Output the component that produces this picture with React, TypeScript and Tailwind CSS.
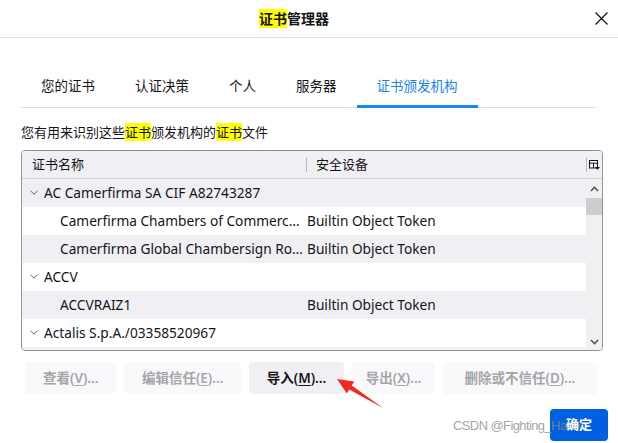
import React from "react";

const FONT = "font-['Noto_Sans','Noto_Sans_CJK_SC',sans-serif]";

type Row = { name: string; device?: string; group?: boolean };

const rows: Row[] = [
  { name: "AC Camerfirma SA CIF A82743287", group: true },
  { name: "Camerfirma Chambers of Commerc…", device: "Builtin Object Token" },
  { name: "Camerfirma Global Chambersign Ro…", device: "Builtin Object Token" },
  { name: "ACCV", group: true },
  { name: "ACCVRAIZ1", device: "Builtin Object Token" },
  { name: "Actalis S.p.A./03358520967", group: true },
];

const tabs = ["您的证书", "认证决策", "个人", "服务器", "证书颁发机构"];

function Mark({ children }: { children: React.ReactNode }) {
  return <span className="bg-[#ffff00]">{children}</span>;
}

function ChevronDown() {
  return (
    <svg width="8" height="5" viewBox="0 0 8 5" className="shrink-0">
      <path d="M0.5 0.8 L4 4.2 L7.5 0.8" fill="none" stroke="#5b5b66" strokeWidth="1" />
    </svg>
  );
}

function ScrollArrow({ up }: { up?: boolean }) {
  return (
    <svg width="9" height="6" viewBox="0 0 9 6">
      <path
        d={up ? "M1 5 L4.5 1.3 L8 5" : "M1 1 L4.5 4.7 L8 1"}
        fill="none"
        stroke="#505050"
        strokeWidth="1.6"
      />
    </svg>
  );
}

function ColumnPicker() {
  return (
    <svg width="11" height="10" viewBox="0 0 11 10">
      <rect x="0.5" y="0.5" width="8" height="7.5" fill="none" stroke="#15141a" strokeWidth="1" />
      <path d="M0.5 3.2 H8.5 M4.5 3.2 V8" stroke="#15141a" strokeWidth="1" />
      <path d="M6 7 H11 L8.5 9.8 Z" fill="#15141a" />
    </svg>
  );
}

function Btn({
  width,
  label,
  keyChar,
  disabled,
}: {
  width: string;
  label: string;
  keyChar: string;
  disabled?: boolean;
}) {
  return (
    <button
      className={`${width} h-[32px] rounded-[4px] text-[13.5px] font-semibold whitespace-nowrap flex items-center justify-center ${
        disabled ? "bg-[#f9f9fb] text-[#a5a5a8]" : "bg-[#f0f0f4] text-[#15141a]"
      }`}
    >
      <span>
        {label}(<u className="underline-offset-2">{keyChar}</u>)...
      </span>
    </button>
  );
}

export default function App() {
  return (
    <div className={`${FONT} relative w-[618px] h-[443px] overflow-hidden bg-white text-[#15141a]`}>
      <div className="flex items-center h-[38px] border-b border-[#e0e0e6]">
        <div className="flex-1 text-center text-[14px] font-bold">
          <Mark>证书</Mark>管理器
        </div>
        <button className="w-[26px] h-[26px] mr-[4px] flex items-center justify-center">
          <svg width="13" height="13" viewBox="0 0 13 13">
            <path d="M0.5 0.5 L12.5 12.5 M12.5 0.5 L0.5 12.5" stroke="#15141a" strokeWidth="1.3" />
          </svg>
        </button>
      </div>

      <div className="px-[21px]">
        <div className="mt-[30px] flex border-b border-[#e0e0e6]">
          {tabs.map((t, i) => {
            const active = i === tabs.length - 1;
            return (
              <div
                key={t}
                className={`h-[40px] px-5 flex items-center text-[13.5px] border-b-[3px] -mb-px ${
                  active ? "border-[#1a85f0] text-[#1a85f0]" : "border-transparent"
                }`}
              >
                {t}
              </div>
            );
          })}
        </div>

        <p className="mt-[15px] text-[13px] leading-[18px]">
          您有用来识别这些<Mark>证书</Mark>颁发机构的<Mark>证书</Mark>文件
        </p>

        <div className="mt-[9px] w-[582px] h-[201px] border border-[#8f8f9d] rounded-[4px] overflow-hidden flex flex-col">
          <div className="h-[28px] shrink-0 flex items-center bg-[#f0f0f4] border-b border-[#d0d0d7] text-[13px]">
            <div className="w-[284px] pl-[10px]">证书名称</div>
            <div className="w-px h-[15px] bg-[#b8b8c0]" />
            <div className="flex-1 pl-[9px]">安全设备</div>
            <div className="w-px h-[15px] bg-[#b8b8c0]" />
            <div className="w-[15px] flex justify-center">
              <ColumnPicker />
            </div>
          </div>

          <div className="flex flex-1 min-h-0">
            <div className="flex-1 overflow-hidden bg-[#f0f0f4]">
              {rows.map((r, i) => (
                <div
                  key={r.name}
                  className={`h-[28px] flex items-center text-[13.7px] ${i % 2 === 0 ? "bg-[#f0f0f4]" : "bg-white"}`}
                >
                  {r.group ? (
                    <div className="flex items-center gap-[6px] pl-[8px]">
                      <ChevronDown />
                      <span className="whitespace-nowrap">{r.name}</span>
                    </div>
                  ) : (
                    <>
                      <div className="w-[285px] pl-[38px] pr-1 truncate whitespace-nowrap">{r.name}</div>
                      <div className="whitespace-nowrap">{r.device}</div>
                    </>
                  )}
                </div>
              ))}
            </div>
            <div className="w-[16px] bg-[#f0f0f0] flex flex-col items-center">
              <div className="h-[19px] flex items-center justify-center">
                <ScrollArrow up />
              </div>
              <div className="w-full h-[17px] bg-[#cdcdcd]" />
              <div className="flex-1" />
              <div className="h-[17px] flex items-center justify-center">
                <ScrollArrow />
              </div>
            </div>
          </div>
        </div>

        <div className="mt-[11px] ml-[4px] flex gap-2">
          <Btn width="w-[92px]" label="查看" keyChar="V" disabled />
          <Btn width="w-[117px]" label="编辑信任" keyChar="E" disabled />
          <Btn width="w-[96px]" label="导入" keyChar="M" />
          <Btn width="w-[83px]" label="导出" keyChar="X" disabled />
          <Btn width="w-[155px]" label="删除或不信任" keyChar="D" disabled />
        </div>
      </div>

      <div className="mt-[15px] pr-[10px] flex justify-end">
        <button className="w-[58px] h-[32px] rounded-[4px] bg-[#0061e0] text-white text-[13px] font-semibold flex items-center justify-center">
          <span className="relative z-20">确定</span>
        </button>
      </div>

      <div className="absolute z-10 left-[453px] top-[417px] text-[13px] leading-[18px] tracking-[-0.6px] text-[#8c8c8c]/80 font-['Liberation_Sans',sans-serif] whitespace-nowrap pointer-events-none">
        CSDN @Fighting_Hawk
      </div>

      <svg className="absolute left-0 top-0 z-10 pointer-events-none" width="618" height="443">
        <polygon
          points="337,379 354.2,381.6 351.8,385.4 383,408 349.2,389.6 346.8,393.4"
          fill="#ef2b1c"
        />
      </svg>
    </div>
  );
}
